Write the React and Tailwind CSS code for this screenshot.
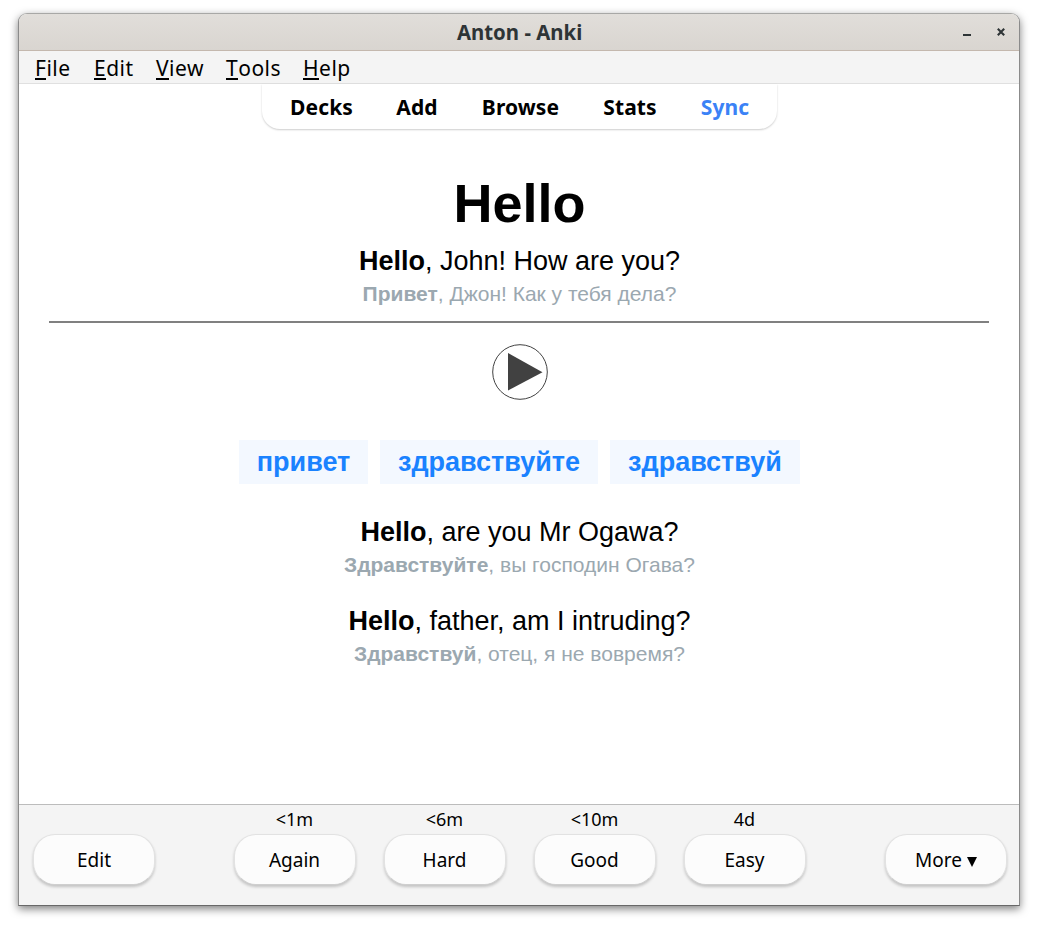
const menu = [
  ["File", "w-[37px]", "mr-[22px]"],
  ["Edit", "w-[40px]", "mr-[22px]"],
  ["View", "w-[49px]", "mr-[21px]"],
  ["Tools", "w-[56px]", "mr-[21px]"],
  ["Help", "w-[47px]", ""],
];

const links = [
  ["Decks", "w-[62px]"],
  ["Add", "w-[42px]"],
  ["Browse", "w-[78px]"],
  ["Stats", "w-[54px]"],
  ["Sync", "w-[49px] text-[#3b82f6]"],
];

const answers = [
  ["<1m", "Again"],
  ["<6m", "Hard"],
  ["<10m", "Good"],
  ["4d", "Easy"],
];

const words = [
  ["привет", "w-[129px]"],
  ["здравствуйте", "w-[218px]"],
  ["здравствуй", "w-[190px]"],
];

function Button({ children }) {
  return (
    <button className="flex h-[51px] w-[122px] items-center justify-center rounded-[22px] border border-[#e2e2e2] border-b-[#cfcfcf] bg-[#fcfcfc] pt-px text-[19px] whitespace-nowrap shadow-[0_2px_3px_rgba(0,0,0,0.2)]">
      {children}
    </button>
  );
}

function Example({ word, rest, trWord, trRest }) {
  return (
    <div className="pl-px text-center whitespace-nowrap">
      <p className="h-[33px] text-[27px] leading-[33px]">
        <b>{word}</b>
        {rest}
      </p>
      <p className="h-[32px] text-[21px] leading-[32px] text-[#9ba8b0]">
        <b>{trWord}</b>
        {trRest}
      </p>
    </div>
  );
}

export default function App() {
  return (
    <div className="h-[928px] w-[1039px] bg-white pt-[13px] pl-[18px] font-['Noto_Sans',sans-serif] text-black">
      <div className="flex h-[893px] w-[1002px] flex-col overflow-hidden rounded-t-[9px] border border-[#8b8b8b] border-t-[#a8a8a6] border-b-[#686868] bg-white shadow-[0_3px_9px_rgba(0,0,0,0.5)]">
        <header className="grid h-[37px] shrink-0 grid-cols-[1fr_auto_1fr] items-center border-b border-[#c4b8ae] bg-linear-to-b from-[#e1deda] to-[#d9d5d0]">
          <span />
          <h1 className="flex w-[126px] justify-center pt-[2px] pl-[2px] text-[21px] font-bold whitespace-nowrap text-[#2e3436]">
            <span className="scale-x-[0.97]">Anton - Anki</span>
          </h1>
          <div className="flex items-center justify-end gap-[26px] pr-[14px] text-[#2e3436]">
            <svg width="8" height="8" viewBox="0 0 8 8">
              <path d="M0 6h8v2H0z" fill="currentColor" />
            </svg>
            <svg width="8" height="8" viewBox="0 0 8 8">
              <path d="M.8.8l6.4 6.4M7.2.8L.8 7.2" stroke="currentColor" strokeWidth="2.1" />
            </svg>
          </div>
        </header>

        <nav className="flex h-[33px] shrink-0 border-b border-[#e0e0e0] bg-[#f4f4f4] pl-4 text-[21px] leading-[34px] tracking-[0.5px]">
          {menu.map(([name, width, gap]) => (
            <span key={name} className={`${width} ${gap} whitespace-nowrap`}>
              <span className="inline-block h-[29px] border-b-2 border-black">{name[0]}</span>
              {name.slice(1)}
            </span>
          ))}
        </nav>

        <main className="flex h-[720px] shrink-0 flex-col items-center font-['Liberation_Sans',sans-serif]">
          <nav className="flex h-[45px] w-[515px] shrink-0 justify-center gap-[43.5px] rounded-b-[18px] pl-[2px] font-['Noto_Sans',sans-serif] text-[21px] leading-[46px] font-bold tracking-[0.1px] shadow-[0_1px_2px_rgba(0,0,0,0.2)]">
            {links.map(([name, style]) => (
              <a key={name} className={`${style} flex justify-center whitespace-nowrap`}>
                {name}
              </a>
            ))}
          </nav>
          <h2 className="mt-[43px] h-[73px] pl-px text-[54px] leading-[62px] font-bold">Hello</h2>
          <Example word="Hello" rest=", John! How are you?" trWord="Привет" trRest=", Джон! Как у тебя дела?" />
          <hr className="mt-[11px] h-[2px] w-[940px] border-0 bg-[#808080]" />
          <svg className="mt-[21px] ml-px shrink-0" width="57" height="56" viewBox="0 0 57 56">
            <circle cx="29" cy="28" r="27.3" fill="white" stroke="#414141" strokeWidth="1" />
            <path d="M17 9v37.5L51.5 28.2z" fill="#414141" />
          </svg>
          <div className="mt-10 mb-8 flex gap-3">
            {words.map(([word, width]) => (
              <span key={word} className={`${width} flex h-11 items-center justify-center bg-[#f3f8ff] pl-px text-[27px] font-bold text-[#1a82ff]`}>
                {word}
              </span>
            ))}
          </div>
          <div className="flex flex-col gap-6">
            <Example word="Hello" rest=", are you Mr Ogawa?" trWord="Здравствуйте" trRest=", вы господин Огава?" />
            <Example word="Hello" rest=", father, am I intruding?" trWord="Здравствуй" trRest=", отец, я не вовремя?" />
          </div>
        </main>

        <footer className="flex grow items-end justify-between border-t border-[#bcbcbc] bg-[#f4f4f4] pr-3 pb-[20px] pl-[14px]">
          <Button>Edit</Button>
          <div className="mr-px flex gap-7">
            {answers.map(([time, name]) => (
              <div key={name} className="flex flex-col items-center">
                <span className="h-[29px] text-[18px] leading-[28px]">{time}</span>
                <Button>{name}</Button>
              </div>
            ))}
          </div>
          <Button>
            More
            <svg className="mt-[3px] ml-[5px]" width="10" height="10" viewBox="0 0 10 10">
              <path d="M0 0h10L5 10z" />
            </svg>
          </Button>
        </footer>
      </div>
    </div>
  );
}
